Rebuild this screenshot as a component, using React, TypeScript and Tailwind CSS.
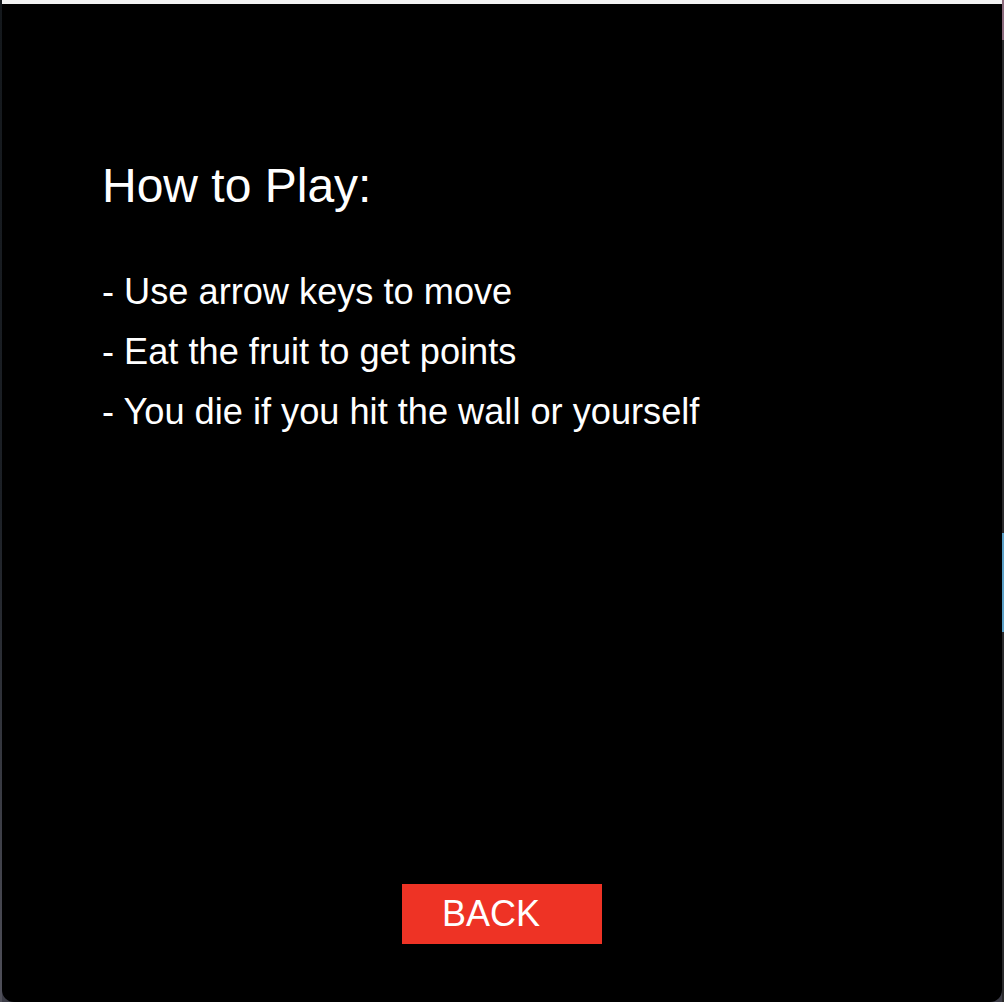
import React from "react";

const rules = [
  "- Use arrow keys to move",
  "- Eat the fruit to get points",
  "- You die if you hit the wall or yourself",
];

const HowToPlay = () => {
  return (
    <div className="flex h-full flex-1 flex-col rounded-b-[12px] bg-black pl-[100px] pt-[158px] pb-[58px] text-white">
      <h1 className="text-[48px] leading-[48px] font-normal">How to Play:</h1>
      <ul className="mt-[52px]">
        {rules.map((rule) => (
          <li key={rule} className="text-[36.2px] leading-[60px]">
            {rule}
          </li>
        ))}
      </ul>
      <div className="mt-auto flex justify-center pr-[100px]">
        <button className="h-[60px] w-[200px] bg-[#ee3325] pl-[40px] pt-0 text-left text-[36px] leading-[32px] text-white">
          BACK
        </button>
      </div>
    </div>
  );
};

export default function App() {
  return (
    <div
      className="flex h-[1002px] w-[1004px] overflow-hidden bg-[#3c3c46]"
      style={{ fontFamily: '"Liberation Sans", Arial, sans-serif' }}
    >
      <div className="w-[2px] bg-gradient-to-b from-[#14181c] via-[#1c2026] to-[#50505a]" />
      <div className="flex w-[1000px] flex-col">
        <div className="h-[4px] bg-[#f2f2f2]" />
        <HowToPlay />
      </div>
      <div className="flex w-[2px] flex-col bg-[#2a2a2c]">
        <div className="h-[40px] bg-[#8a6a7c]" />
        <div className="h-[493px]" />
        <div className="h-[99px] bg-[#5aa0c8]" />
        <div className="flex-1" />
      </div>
    </div>
  );
}
